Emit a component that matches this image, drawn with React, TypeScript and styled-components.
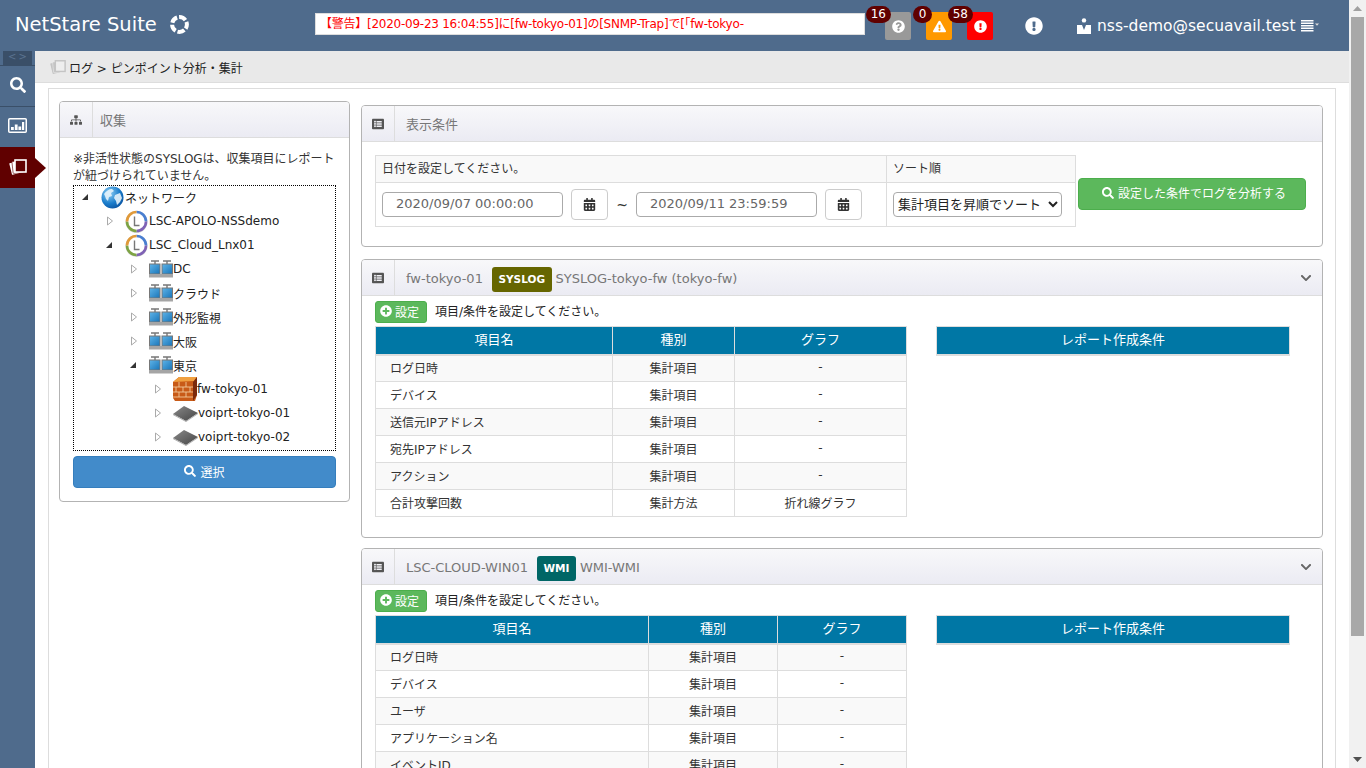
import styled, { createGlobalStyle } from 'styled-components';
import {
  FaCalendarAlt,
  FaChevronDown,
  FaExclamationCircle,
  FaExclamationTriangle,
  FaListAlt,
  FaPlusCircle,
  FaQuestionCircle,
  FaSearch,
  FaSitemap,
} from 'react-icons/fa';

const fontStack = '"DejaVu Sans", "Noto Sans CJK JP", sans-serif';

const GlobalStyle = createGlobalStyle`
  html, body {
    margin: 0;
    height: 100%;
    overflow: hidden;
    background: #fff;
  }
  body {
    font-family: ${fontStack};
    font-size: 12px;
    color: #333;
  }
  * { box-sizing: border-box; }
`;

const Shell = styled.div`
  display: flex;
  width: 1366px;
  height: 768px;
  overflow: hidden;
`;

const Page = styled.div`
  display: flex;
  flex-direction: column;
  width: 1349px;
  height: 768px;
  background: #4f6b8c;
`;

const Header = styled.header`
  position: relative;
  display: flex;
  align-items: center;
  flex: 0 0 51px;
  color: #fff;
`;

const Logo = styled.div`
  display: flex;
  align-items: center;
  gap: 12px;
  width: 315px;
  padding: 0 0 3px 15px;
  font-size: 19.5px;
`;

const Ticker = styled.div`
  width: 550px;
  height: 22px;
  margin-top: -3px;
  padding-left: 4px;
  overflow: hidden;
  border: 1px solid #ddd;
  background: #fff;
  color: #f00;
  font-size: 12px;
  letter-spacing: -0.25px;
  line-height: 20px;
  white-space: nowrap;
`;

const Alerts = styled.div`
  display: flex;
  gap: 15px;
  margin-left: 20px;
  margin-top: 1px;
`;

const AlertTile = styled.div<{ $bg: string }>`
  position: relative;
  display: flex;
  align-items: center;
  justify-content: center;
  width: 26px;
  height: 28px;
  padding-top: 1px;
  border-radius: 2px;
  background: ${p => p.$bg};
  color: #fff;
  font-size: 13px;
`;

const AlertBadge = styled.span`
  position: absolute;
  top: -6px;
  right: 20px;
  min-width: 19px;
  height: 17px;
  padding: 0 5px;
  border-radius: 9px;
  background: #600000;
  color: #fff;
  font-size: 12px;
  line-height: 17px;
  text-align: center;
`;

const InfoIcon = styled.div`
  display: flex;
  margin-left: 32px;
  font-size: 18px;
`;

const UserBlock = styled.div`
  display: flex;
  align-items: center;
  margin-left: 34px;
  padding-top: 1px;
  font-size: 15.5px;
  gap: 6px;
`;

const Body = styled.div`
  display: flex;
  flex: 1;
  min-height: 0;
`;

const Sidebar = styled.nav`
  flex: 0 0 35px;
  color: #fff;
`;

const SideHandle = styled.div`
  display: flex;
  justify-content: space-between;
  width: 29px;
  height: 14px;
  margin-left: 3px;
  padding: 0 5px;
  background: #3a4f68;
  color: #5b7390;
  font-size: 10px;
  line-height: 11px;
`;

const SideItem = styled.div<{ $active?: boolean }>`
  position: relative;
  display: flex;
  align-items: center;
  justify-content: center;
  height: 41px;
  padding-bottom: 3px;
  border-top: 1px solid ${p => (p.$active ? '#600000' : '#3a4f68')};
  background: ${p => (p.$active ? '#600000' : 'transparent')};
  font-size: 16px;

  ${p =>
    p.$active &&
    `&::after {
      content: '';
      position: absolute;
      top: 10px;
      left: 35px;
      border-style: solid;
      border-width: 10px 0 10px 11px;
      border-color: transparent transparent transparent #600000;
      z-index: 2;
    }`}
`;

const Content = styled.main`
  flex: 1;
  min-width: 0;
  overflow: hidden;
  background: #fff;
`;

const Breadcrumb = styled.div`
  display: flex;
  align-items: center;
  gap: 3px;
  height: 32px;
  padding: 1px 0 0 15px;
  border-bottom: 1px solid #ddd;
  background: #e9e9e9;
  color: #222;
  font-size: 12px;
`;

const Frame = styled.div`
  display: flex;
  align-items: flex-start;
  gap: 11px;
  margin: 5px 13px 0;
  padding: 12px 12px 0 10px;
  border: 1px solid #ddd;
  border-bottom: 0;
`;

const LeftCol = styled.div`
  flex: 0 0 291px;
`;

const RightCol = styled.div`
  flex: 1;
  min-width: 0;
  display: flex;
  flex-direction: column;
  gap: 10px;
  margin-top: 4px;
`;

const Panel = styled.section`
  border: 1px solid #b3b3b3;
  border-radius: 4px;
  background: #fff;
  overflow: hidden;
`;

const ConditionPanel = styled(Panel)`
  margin-bottom: 2px;
`;

const PanelHead = styled.div`
  display: flex;
  align-items: center;
  height: 36px;
  border-bottom: 1px solid #ddd;
  background: linear-gradient(#f8f8fa, #ebebf3);
  color: #777;
  font-size: 13px;
`;

const HeadIcon = styled.div`
  display: flex;
  align-items: center;
  justify-content: center;
  flex: 0 0 33px;
  height: 100%;
  border-right: 1px solid #ddd;
  color: #555;
  font-size: 12px;
`;

const HeadTitle = styled.span`
  margin-left: 11px;
`;

const LeftTitle = styled(HeadTitle)`
  margin-left: 7px;
`;

const NodeTitle = styled(HeadTitle)`
  margin-top: 2px;
`;

const SourceName = styled.span`
  margin-top: 2px;
`;

const TypeTag = styled.span<{ $bg: string }>`
  margin: 4px 4px 0 9px;
  padding: 0 6.5px;
  height: 25px;
  border-radius: 3px;
  background: ${p => p.$bg};
  color: #fff;
  font-size: 10.5px;
  font-weight: 700;
  line-height: 25px;
`;

const HeadChevron = styled.div`
  display: flex;
  margin-left: auto;
  margin-right: 10px;
  color: #666;
  font-size: 12px;
`;

const LeftBody = styled.div`
  padding: 12px 13px 13px;
`;

const Notice = styled.p`
  margin: 0 0 1px;
  padding-top: 1px;
  color: #333;
  font-size: 12px;
  line-height: 17px;
  height: 34px;
`;

const TreeBox = styled.div`
  height: 266px;
  border: 1px dotted #000;
  overflow: hidden;
`;

const TreeRow = styled.div<{ $level: number }>`
  display: flex;
  align-items: center;
  height: 24px;
  padding-left: ${p => 7 + p.$level * 24}px;
  color: #222;
  font-size: 12px;

  &:first-child {
    margin-top: -1px;
  }
`;

const Toggle = styled.div`
  display: flex;
  align-items: center;
  flex: 0 0 20px;
`;

const NodeIcon = styled.div`
  display: flex;
  align-items: center;
  flex: 0 0 24px;
`;

const BlockButton = styled.button`
  display: flex;
  align-items: center;
  justify-content: center;
  gap: 4px;
  width: 100%;
  height: 32px;
  margin-top: 5px;
  padding: 0 0 2px;
  border: 1px solid #357ebd;
  border-radius: 4px;
  background: #428bca;
  color: #fff;
  font-family: inherit;
  font-size: 12px;
`;

const ConditionBody = styled.div`
  display: flex;
  padding: 13px 13px 19px;
`;

const DateTable = styled.table`
  width: 700px;
  border-collapse: collapse;
  table-layout: fixed;
  color: #333;

  th {
    height: 27px;
    padding: 0 6px 3px;
    border: 1px solid #ddd;
    background: #f9f9f9;
    font-size: 12px;
    font-weight: 400;
    text-align: left;
  }

  td {
    height: 44px;
    padding: 0 6px;
    border: 1px solid #ddd;
  }
`;

const DateRow = styled.div`
  display: flex;
  align-items: center;
`;

const DateInput = styled.input`
  width: 181px;
  height: 25px;
  padding: 0 13px 3px;
  border: 1px solid #aaa;
  border-radius: 4px;
  color: #666;
  font-family: inherit;
  font-size: 13px;
`;

const CalButton = styled.button`
  display: flex;
  align-items: center;
  justify-content: center;
  width: 37px;
  height: 31px;
  margin-left: 8px;
  border: 1px solid #ccc;
  border-radius: 4px;
  background: #fff;
  color: #333;
  font-size: 13px;
`;

const Tilde = styled.span`
  width: 28px;
  text-align: center;
  font-size: 14px;
`;

const SortSelect = styled.select`
  width: 169px;
  height: 25px;
  border: 1px solid #aaa;
  border-radius: 4px;
  background: #fff;
  color: #222;
  font-family: inherit;
  font-size: 13px;
`;

const AnalyzeButton = styled.button`
  display: flex;
  align-items: center;
  justify-content: center;
  gap: 4px;
  width: 228px;
  height: 32px;
  margin: 23px 0 0 2px;
  padding: 0 0 3px 4px;
  border: 1px solid #4cae4c;
  border-radius: 4px;
  background: #5cb85c;
  color: #fff;
  font-family: inherit;
  font-size: 12px;
`;

const ReportBody = styled.div`
  padding: 5px 13px 20px;
`;

const SetRow = styled.div`
  display: flex;
  align-items: center;
  gap: 8px;
  height: 22px;
  margin-bottom: 3px;
  color: #222;
  font-size: 12px;
`;

const SetHint = styled.span`
  margin-top: -4px;
`;

const SetButton = styled.button`
  display: flex;
  align-items: center;
  gap: 3px;
  width: 52px;
  height: 22px;
  padding: 0 4px 2px;
  border: 1px solid #4cae4c;
  border-radius: 3px;
  background: #5cb85c;
  color: #fff;
  font-family: inherit;
  font-size: 12px;
  white-space: nowrap;
`;

const Tables = styled.div`
  display: flex;
  align-items: flex-start;
  gap: 29px;
`;

const ItemTable = styled.table`
  width: 531px;
  border-collapse: collapse;
  table-layout: fixed;
  color: #333;
  font-size: 12px;

  th {
    height: 28px;
    padding: 0 0 4px;
    border: 1px solid #ddd;
    border-bottom-width: 2px;
    background: #0077a5;
    color: #fff;
    font-weight: 400;
    font-size: 13px;
  }

  td {
    height: 27px;
    padding: 0 0 2px;
    border: 1px solid #ddd;
    text-align: center;
  }

  td:first-child {
    padding-left: 14px;
    text-align: left;
  }

  tbody tr:nth-child(odd) {
    background: #f9f9f9;
  }
`;

const ReportTable = styled(ItemTable)`
  width: 354px;
`;

const Scrollbar = styled.div`
  display: flex;
  flex-direction: column;
  align-items: center;
  flex: 0 0 17px;
  height: 768px;
  background: #f1f1f1;
`;

const ScrollArrow = styled.div`
  display: flex;
  align-items: center;
  justify-content: center;
  flex: 0 0 17px;
`;

const ScrollThumb = styled.div`
  width: 13px;
  flex: 0 0 619px;
  background: #a8a8a8;
`;

const ScrollRest = styled.div`
  flex: 1;
`;

const LogoRing = () => (
  <svg width="21" height="21" viewBox="0 0 21 21">
    <circle cx="10.5" cy="10.5" r="7.4" fill="none" stroke="#fff" strokeWidth="4" strokeDasharray="7.3 2" strokeDashoffset="3" />
  </svg>
);

const LogStack = ({ color, front, size = 18 }: { color: string; front: string; size?: number }) => (
  <svg width={size} height={size} viewBox="0 0 18 18">
    <rect x="1.5" y="4" width="9" height="12" rx="0.5" fill={color} transform="rotate(-14 6 10)" />
    <rect x="3.5" y="3" width="10" height="12" rx="0.5" fill={color} stroke={front} strokeWidth="0.6" transform="rotate(-6 8 9)" />
    <rect x="6" y="2" width="11" height="12" fill={front} stroke={color} strokeWidth="1.6" />
  </svg>
);

const ChartIcon = () => (
  <svg width="19" height="15" viewBox="0 0 19 15">
    <rect x="0.75" y="0.75" width="17.5" height="13.5" rx="1" fill="none" stroke="#fff" strokeWidth="1.5" />
    <path d="M3 12V9h2.8v3zM6.8 12V6.5h2.8V12zM10.4 12V8.5h2.8V12zM14 12V4h2.2v8z" fill="#fff" />
  </svg>
);

const UserIcon = () => (
  <svg width="14" height="16" viewBox="0 0 14 16">
    <circle cx="7" cy="2.4" r="2.2" fill="#fff" />
    <path d="M0 7h5L7 12l2-5h5v9H0z" fill="#fff" />
  </svg>
);

const MenuIcon = () => (
  <svg width="18" height="12" viewBox="0 0 18 12">
    <path d="M0 0h12.5v1.4H0zM0 2.5h12.5v1.4H0zM0 5h12.5v1.4H0zM0 7.5h12.5v1.4H0zM0 10h12.5v1.4H0z" fill="#fff" />
    <path d="M14 3.5h4l-2 2.2z" fill="#ddd" />
  </svg>
);

const GlobeIcon = () => (
  <svg width="23" height="23" viewBox="0 0 23 23">
    <defs>
      <radialGradient id="globeFill" cx="0.35" cy="0.3" r="0.8">
        <stop offset="0" stopColor="#8fd0f5" />
        <stop offset="0.6" stopColor="#1a7ccb" />
        <stop offset="1" stopColor="#0a4f9c" />
      </radialGradient>
    </defs>
    <circle cx="11.5" cy="11.5" r="11" fill="url(#globeFill)" />
    <path d="M3 8c2-3 5-5 8-5l2 2-3 2 1 3-3 1-1 4-2-2-1-3zM14 9l5-2 2 5-2 4-3 3-1-4-2-3z" fill="#e6f3fb" opacity="0.9" />
  </svg>
);

const RingIcon = () => (
  <svg width="23" height="23" viewBox="0 0 23 23">
    <circle cx="11.5" cy="12" r="11" fill="#d5d5d5" />
    <circle cx="11.5" cy="11.5" r="9.5" fill="#fff" />
    <path d="M11.5 2a9.5 9.5 0 0 1 9.5 9.5" fill="none" stroke="#4a7fd0" strokeWidth="2.6" />
    <path d="M21 11.5a9.5 9.5 0 0 1-9.5 9.5" fill="none" stroke="#7f62b5" strokeWidth="2.6" />
    <path d="M11.5 21A9.5 9.5 0 0 1 2 11.5" fill="none" stroke="#7da344" strokeWidth="2.6" />
    <path d="M2 11.5A9.5 9.5 0 0 1 11.5 2" fill="none" stroke="#e09a3a" strokeWidth="2.6" />
    <path d="M9.5 6.5v9h5" fill="none" stroke="#777" strokeWidth="1.4" />
  </svg>
);

const NetworkIcon = () => (
  <svg width="24" height="18" viewBox="0 0 24 18">
    <defs>
      <linearGradient id="netScreen" x1="0" y1="0" x2="1" y2="1">
        <stop offset="0" stopColor="#5fb4e8" />
        <stop offset="1" stopColor="#1874b8" />
      </linearGradient>
    </defs>
    <path d="M2 1h8M14 1h8" stroke="#777" strokeWidth="1.4" />
    <path d="M6 1v3M18 1v3" stroke="#777" strokeWidth="1.4" />
    <rect x="0.5" y="4" width="10.5" height="10" fill="url(#netScreen)" stroke="#777" />
    <rect x="13" y="4" width="10.5" height="10" fill="url(#netScreen)" stroke="#777" />
    <rect x="0" y="14" width="24" height="3.5" fill="#a5a5a5" />
  </svg>
);

const FirewallIcon = () => (
  <svg width="24" height="24" viewBox="0 0 24 24">
    <path d="M0 5l6-5h18v18l-2 6H2l-2-3z" fill="#c85a17" />
    <path d="M0 5l6-5h18l-3 4-21 1z" fill="#f0a040" />
    <path d="M20 5l4-5v18l-4 6z" fill="#7a2a0c" />
    <path d="M0 10h20M0 15h20M0 20h20M6 5v5M13 5v5M3 10v5M10 10v5M17 10v5M6 15v5M13 15v5" stroke="#f2c89a" strokeWidth="0.9" />
  </svg>
);

const RouterIcon = () => (
  <svg width="25" height="17" viewBox="0 0 25 17">
    <defs>
      <linearGradient id="routerTop" x1="0" y1="0" x2="1" y2="1">
        <stop offset="0" stopColor="#8a8a8a" />
        <stop offset="1" stopColor="#444" />
      </linearGradient>
    </defs>
    <path d="M0 9l11-8 14 7-12 8z" fill="url(#routerTop)" />
    <path d="M0 9l13 7v1L0 10zM25 8l-12 8v1l12-8z" fill="#aaa" />
  </svg>
);

const OpenArrow = () => (
  <svg width="10" height="10" viewBox="0 0 10 10">
    <path d="M7 2v6H1z" fill="#333" />
  </svg>
);

const ClosedArrow = () => (
  <svg width="10" height="10" viewBox="0 0 10 10">
    <path d="M2.5 1l5 4-5 4z" fill="#fff" stroke="#aaa" />
  </svg>
);

type TreeNode = { level: number; label: string; open?: boolean; icon: React.ReactNode };

const treeNodes: TreeNode[] = [
  { level: 0, label: 'ネットワーク', open: true, icon: <GlobeIcon /> },
  { level: 1, label: 'LSC-APOLO-NSSdemo', icon: <RingIcon /> },
  { level: 1, label: 'LSC_Cloud_Lnx01', open: true, icon: <RingIcon /> },
  { level: 2, label: 'DC', icon: <NetworkIcon /> },
  { level: 2, label: 'クラウド', icon: <NetworkIcon /> },
  { level: 2, label: '外形監視', icon: <NetworkIcon /> },
  { level: 2, label: '大阪', icon: <NetworkIcon /> },
  { level: 2, label: '東京', open: true, icon: <NetworkIcon /> },
  { level: 3, label: 'fw-tokyo-01', icon: <FirewallIcon /> },
  { level: 3, label: 'voiprt-tokyo-01', icon: <RouterIcon /> },
  { level: 3, label: 'voiprt-tokyo-02', icon: <RouterIcon /> },
];

const fwRows = [
  ['ログ日時', '集計項目', '-'],
  ['デバイス', '集計項目', '-'],
  ['送信元IPアドレス', '集計項目', '-'],
  ['宛先IPアドレス', '集計項目', '-'],
  ['アクション', '集計項目', '-'],
  ['合計攻撃回数', '集計方法', '折れ線グラフ'],
];

const wmiRows = [
  ['ログ日時', '集計項目', '-'],
  ['デバイス', '集計項目', '-'],
  ['ユーザ', '集計項目', '-'],
  ['アプリケーション名', '集計項目', '-'],
  ['イベントID', '集計項目', '-'],
];

const ReportSection = ({
  head,
  rows,
  widths,
}: {
  head: React.ReactNode;
  rows: string[][];
  widths: number[];
}) => (
  <Panel>
    <PanelHead>
      <HeadIcon>
        <FaListAlt />
      </HeadIcon>
      {head}
      <HeadChevron>
        <FaChevronDown />
      </HeadChevron>
    </PanelHead>
    <ReportBody>
      <SetRow>
        <SetButton>
          <FaPlusCircle />
          設定
        </SetButton>
        <SetHint>項目/条件を設定してください。</SetHint>
      </SetRow>
      <Tables>
        <ItemTable>
          <colgroup>
            {widths.map((w, i) => (
              <col key={i} width={w} />
            ))}
          </colgroup>
          <thead>
            <tr>
              <th>項目名</th>
              <th>種別</th>
              <th>グラフ</th>
            </tr>
          </thead>
          <tbody>
            {rows.map(r => (
              <tr key={r[0]}>
                {r.map((c, i) => (
                  <td key={i}>{c}</td>
                ))}
              </tr>
            ))}
          </tbody>
        </ItemTable>
        <ReportTable>
          <thead>
            <tr>
              <th>レポート作成条件</th>
            </tr>
          </thead>
        </ReportTable>
      </Tables>
    </ReportBody>
  </Panel>
);

const App = () => (
  <>
    <GlobalStyle />
    <Shell>
      <Page>
        <Header>
          <Logo>
            NetStare Suite
            <LogoRing />
          </Logo>
          <Ticker>【警告】[2020-09-23 16:04:55]に[fw-tokyo-01]の[SNMP-Trap]で[「fw-tokyo-</Ticker>
          <Alerts>
            <AlertTile $bg="#999">
              <AlertBadge>16</AlertBadge>
              <FaQuestionCircle />
            </AlertTile>
            <AlertTile $bg="#f90">
              <AlertBadge>0</AlertBadge>
              <FaExclamationTriangle />
            </AlertTile>
            <AlertTile $bg="#f00">
              <AlertBadge>58</AlertBadge>
              <FaExclamationCircle />
            </AlertTile>
          </Alerts>
          <InfoIcon>
            <FaExclamationCircle />
          </InfoIcon>
          <UserBlock>
            <UserIcon />
            nss-demo@secuavail.test
            <MenuIcon />
          </UserBlock>
        </Header>
        <Body>
          <Sidebar>
            <SideHandle>
              <span>&lt;</span>
              <span>&gt;</span>
            </SideHandle>
            <SideItem>
              <FaSearch />
            </SideItem>
            <SideItem>
              <ChartIcon />
            </SideItem>
            <SideItem $active>
              <LogStack color="#fff" front="#600000" />
            </SideItem>
          </Sidebar>
          <Content>
            <Breadcrumb>
              <LogStack color="#c4c4c4" front="#eee" size={16} />
              ログ &gt; ピンポイント分析・集計
            </Breadcrumb>
            <Frame>
              <LeftCol>
                <Panel>
                  <PanelHead>
                    <HeadIcon>
                      <FaSitemap />
                    </HeadIcon>
                    <LeftTitle>収集</LeftTitle>
                  </PanelHead>
                  <LeftBody>
                    <Notice>※非活性状態のSYSLOGは、収集項目にレポートが紐づけられていません。</Notice>
                    <TreeBox>
                      {treeNodes.map(n => (
                        <TreeRow key={n.label} $level={n.level}>
                          <Toggle>{n.open ? <OpenArrow /> : <ClosedArrow />}</Toggle>
                          <NodeIcon>{n.icon}</NodeIcon>
                          {n.label}
                        </TreeRow>
                      ))}
                    </TreeBox>
                    <BlockButton>
                      <FaSearch />
                      選択
                    </BlockButton>
                  </LeftBody>
                </Panel>
              </LeftCol>
              <RightCol>
                <ConditionPanel>
                  <PanelHead>
                    <HeadIcon>
                      <FaListAlt />
                    </HeadIcon>
                    <HeadTitle>表示条件</HeadTitle>
                  </PanelHead>
                  <ConditionBody>
                    <DateTable>
                      <colgroup>
                        <col width={511} />
                        <col width={189} />
                      </colgroup>
                      <thead>
                        <tr>
                          <th>日付を設定してください。</th>
                          <th>ソート順</th>
                        </tr>
                      </thead>
                      <tbody>
                        <tr>
                          <td>
                            <DateRow>
                              <DateInput readOnly value="2020/09/07 00:00:00" />
                              <CalButton>
                                <FaCalendarAlt />
                              </CalButton>
                              <Tilde>~</Tilde>
                              <DateInput readOnly value="2020/09/11 23:59:59" />
                              <CalButton>
                                <FaCalendarAlt />
                              </CalButton>
                            </DateRow>
                          </td>
                          <td>
                            <SortSelect defaultValue="asc">
                              <option value="asc">集計項目を昇順でソート</option>
                            </SortSelect>
                          </td>
                        </tr>
                      </tbody>
                    </DateTable>
                    <AnalyzeButton>
                      <FaSearch />
                      設定した条件でログを分析する
                    </AnalyzeButton>
                  </ConditionBody>
                </ConditionPanel>
                <ReportSection
                  rows={fwRows}
                  widths={[237, 122, 172]}
                  head={
                    <>
                      <NodeTitle>fw-tokyo-01</NodeTitle>
                      <TypeTag $bg="#666600">SYSLOG</TypeTag>
                      <SourceName>SYSLOG-tokyo-fw (tokyo-fw)</SourceName>
                    </>
                  }
                />
                <ReportSection
                  rows={wmiRows}
                  widths={[273, 129, 129]}
                  head={
                    <>
                      <NodeTitle>LSC-CLOUD-WIN01</NodeTitle>
                      <TypeTag $bg="#006666">WMI</TypeTag>
                      <SourceName>WMI-WMI</SourceName>
                    </>
                  }
                />
              </RightCol>
            </Frame>
          </Content>
        </Body>
      </Page>
      <Scrollbar>
        <ScrollArrow>
          <svg width="9" height="5" viewBox="0 0 9 5">
            <path d="M4.5 0L9 5H0z" fill="#a0a0a0" />
          </svg>
        </ScrollArrow>
        <ScrollThumb />
        <ScrollRest />
        <ScrollArrow>
          <svg width="9" height="5" viewBox="0 0 9 5">
            <path d="M0 0h9L4.5 5z" fill="#505050" />
          </svg>
        </ScrollArrow>
      </Scrollbar>
    </Shell>
  </>
);

export default App;
